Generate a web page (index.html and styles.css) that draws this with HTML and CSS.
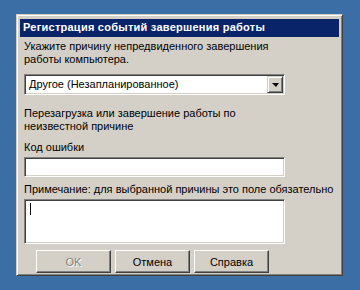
FILE: index.html
```html
<!DOCTYPE html>
<html lang="ru">
<head>
    <meta charset="UTF-8">
    <title>Регистрация событий завершения работы</title>
    <link rel="stylesheet" href="styles.css">
</head>
<body>

    <!-- Shutdown Event Tracker dialog -->
    <div class="window">
        <div class="titlebar">Регистрация событий завершения работы</div>
        <div class="content">
            <div class="text">Укажите причину непредвиденного завершения<br>работы компьютера.</div>
            <div class="combo">
                <div class="combo-value">Другое (Незапланированное)</div>
                <div class="combo-btn"><span class="arrow"></span></div>
            </div>
            <div class="text desc">Перезагрузка или завершение работы по<br>неизвестной причине</div>
            <div class="text label">Код ошибки</div>
            <div class="edit"></div>
            <div class="text label note">Примечание: для выбранной причины это поле обязательно</div>
            <div class="edit memo"><span class="caret"></span></div>
            <div class="buttons">
                <div class="button disabled">OK</div>
                <div class="button">Отмена</div>
                <div class="button">Справка</div>
            </div>
        </div>
    </div>

</body>
</html>
```

FILE: styles.css
```css
body {
    margin: 0;
    background: #3a6ea5;
    font-family: "Liberation Sans", Arial, sans-serif;
    font-size: 11px;
    color: #000;
}

/* Window frame */
.window {
    box-sizing: border-box;
    width: 327px;
    height: 262px;
    margin: 14px 0 0 16px;
    padding: 3px;
    background: #d4d0c8;
    border: 1px solid;
    border-color: #d4d0c8 #404040 #404040 #d4d0c8;
    box-shadow: inset 1px 1px #fff, inset -1px -1px #808080;
}
.titlebar {
    height: 18px;
    margin-top: 1px;
    box-sizing: border-box;
    padding: 1px 0 0 3px;
    line-height: 15px;
    background: #0a246a;
    color: #fff;
    font-weight: bold;
    letter-spacing: 0.25px;
    white-space: nowrap;
}

/* Dialog body */
.content {
    padding: 3px 0 0 4px;
}
.text {
    line-height: 13px;
    white-space: nowrap;
}
.desc { margin-top: 12px; }
.label { margin-top: 8px; }
.note { margin-top: 6px; }

/* Sunken fields */
.combo, .edit {
    box-sizing: border-box;
    width: 261px;
    background: #fff;
    border: 1px solid;
    border-color: #808080 #fff #fff #808080;
    box-shadow: inset 1px 1px #404040, inset -1px -1px #d4d0c8;
}
.combo {
    height: 21px;
    margin-top: 8px;
    display: flex;
    align-items: center;
    padding: 1px;
}
.combo-value {
    flex: 1;
    padding-left: 3px;
    line-height: 17px;
}
.combo-btn {
    box-sizing: border-box;
    width: 16px;
    height: 17px;
    display: flex;
    align-items: center;
    justify-content: center;
    background: #d4d0c8;
    border: 1px solid;
    border-color: #d4d0c8 #404040 #404040 #d4d0c8;
    box-shadow: inset 1px 1px #fff, inset -1px -1px #808080;
}
.arrow {
    width: 0;
    height: 0;
    border-left: 4px solid transparent;
    border-right: 3px solid transparent;
    border-top: 4px solid #000;
}
.edit {
    height: 20px;
    margin-top: 3px;
}
.memo {
    height: 45px;
    padding: 3px 0 0 5px;
}
.caret {
    display: block;
    width: 1px;
    height: 12px;
    background: #000;
}

/* Push buttons */
.buttons {
    display: flex;
    gap: 4px;
    margin: 6px 0 0 12px;
}
.button {
    box-sizing: border-box;
    width: 75px;
    height: 23px;
    display: flex;
    align-items: center;
    justify-content: center;
    border: 1px solid;
    border-color: #fff #404040 #404040 #fff;
    box-shadow: inset -1px -1px #808080;
}
.button.disabled {
    color: #808080;
    text-shadow: 1px 1px #fff;
}
```
